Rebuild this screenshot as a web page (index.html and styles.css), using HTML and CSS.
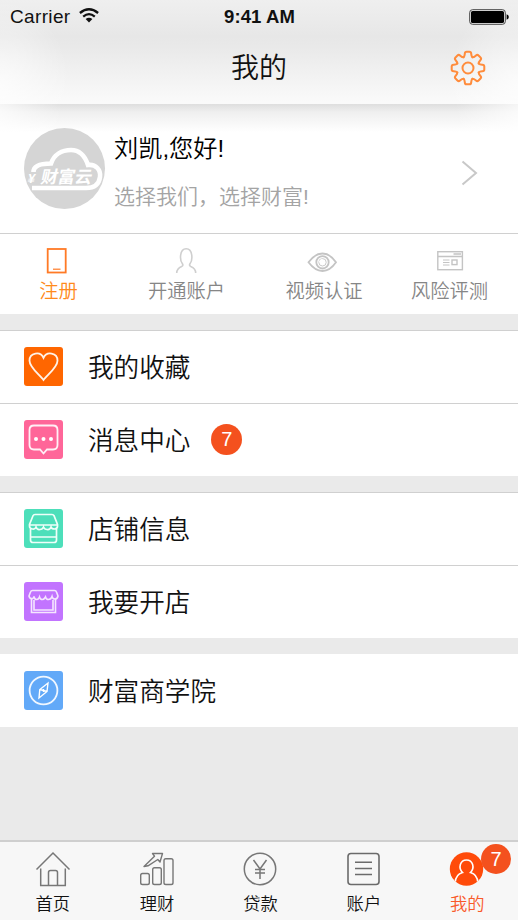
FILE: index.html
```html
<!DOCTYPE html>
<html lang="zh-CN">
<head>
<meta charset="utf-8">
<title>我的</title>
<link rel="stylesheet" href="styles.css">
</head>
<body>
<div class="app">
  <header class="header">
    <div class="status">
      <div class="carrier">Carrier
        <svg class="wifi" width="20" height="15" viewBox="0 0 20 15"><g fill="none" stroke="#111" stroke-width="2.3"><path d="M.9 5Q10-2.6 19.1 5"/><path d="M4.2 8.6Q10 3.7 15.8 8.6"/></g><path d="M6.6 11.1Q10 8.2 13.4 11.1L10 14.4Z" fill="#111"/></svg>
      </div>
      <div class="time">9:41 AM</div>
      <svg class="battery" width="40" height="16" viewBox="0 0 40 16"><rect x=".7" y=".7" width="35.6" height="14.6" rx="2.8" fill="#eee" stroke="#444"/><rect x="2" y="2" width="33" height="12" rx="1.6" fill="#000"/><path d="M37.6 5.2Q39.8 5.8 39.8 8T37.6 10.8Z" fill="#000"/></svg>
    </div>
    <div class="titlebar">
      <h1>我的</h1>
      <svg class="gear" width="36" height="36" viewBox="-18 -18 36 36" fill="none" stroke="#ff8c3c" stroke-width="2" stroke-linecap="round">
        <defs><path id="tooth" d="M-4.4-10.7C-3.3-11.8-3.3-12.7-3.2-14.4Q-3.1-16.3-1.4-16.3H1.4Q3.1-16.3 3.2-14.4C3.3-12.7 3.3-11.8 4.4-10.7"/></defs>
        <use href="#tooth"/><use href="#tooth" transform="rotate(45)"/><use href="#tooth" transform="rotate(90)"/><use href="#tooth" transform="rotate(135)"/><use href="#tooth" transform="rotate(180)"/><use href="#tooth" transform="rotate(225)"/><use href="#tooth" transform="rotate(270)"/><use href="#tooth" transform="rotate(315)"/>
        <circle r="5.5"/>
      </svg>
    </div>
  </header>

  <section class="profile">
    <svg class="avatar" width="82" height="82" viewBox="0 0 82 82">
      <circle cx="40.5" cy="41.5" r="40.5" fill="#d5d5d5"/>
      <path d="M9.5 45C9.5 40 15 36.500 27 36.500C30 27.500 38 23 47 23C56 23 61 29 64 38C72 37 77 43 76 50C75 58 69 61 62 61H8" fill="none" stroke="#fff" stroke-width="4.600"/>
      <text class="logo" x="3" y="56" font-size="13" transform="translate(12 0) skewX(-12)">¥</text>
      <text class="logo" x="16" y="56" font-size="17" transform="translate(12 0) skewX(-12)">财富云</text>
    </svg>
    <div class="greeting">
      <p class="name">刘凯,您好!</p>
      <p class="slogan">选择我们，选择财富!</p>
    </div>
    <svg class="chevron" width="17" height="26" viewBox="0 0 17 26"><path d="M1.5 1.5L15 13L1.5 24.5" fill="none" stroke="#c8c8c8" stroke-width="2"/></svg>
  </section>

  <nav class="shortcuts">
    <a class="shortcut on">
      <svg width="40" height="28" viewBox="0 0 40 28" fill="none" stroke="#ff7a26"><rect x="8.7" y="3" width="18" height="23.5" stroke-width="1.8"/><path d="M14 23.2H21.5" stroke-width="1.2"/></svg>
      <span>注册</span>
    </a>
    <a class="shortcut">
      <svg width="40" height="28" viewBox="0 0 40 28" fill="none" stroke="#cfcfcf" stroke-width="1.6"><path d="M9.700 27C9.700 23 11.500 21.700 14.700 20.400Q16.600 19.500 15.400 17.800C12.700 14.500 12.200 2.700 19.200 2.700S25.700 14.500 23 17.800Q21.800 19.500 23.700 20.400C27 21.700 28.700 23 28.700 27"/></svg>
      <span>开通账户</span>
    </a>
    <a class="shortcut">
      <svg width="40" height="28" viewBox="0 0 40 28" fill="none" stroke="#c4c4c4" stroke-width="1.8"><path d="M4.500 16.300Q11 7.500 18.500 7.500T32 16.300Q26 25 18.500 25T4.500 16.300Z"/><circle cx="18.500" cy="16.300" r="6.200"/><circle cx="18.500" cy="16.300" r="3.700" stroke-width=".9"/><path d="M15.500 16L18 13.500" stroke="#fff"/></svg>
      <span>视频认证</span>
    </a>
    <a class="shortcut">
      <svg width="40" height="28" viewBox="0 0 40 28" fill="none" stroke="#c4c4c4" stroke-width="1.4"><rect x="7.800" y="5.700" width="24.600" height="18"/><path d="M8 10.500H32M23.500 8H31"/><path d="M13 14H19.500M13 16.500H19.500M13 19H19.500" stroke-width="1"/><rect x="22" y="14" width="5" height="4.600"/></svg>
      <span>风险评测</span>
    </a>
  </nav>

  <main>
    <section class="group">
      <a class="row">
        <svg class="tile" width="39" height="39" viewBox="0 0 39 39"><rect width="39" height="39" rx="3" fill="#ff6600"/><path d="M19.5 33C16 28 5.5 20.5 5.5 13.7C5.5 5.5 16.5 4 19.5 10.8C22.5 4 33.5 5.5 33.5 13.7C33.5 20.5 23 28 19.5 33Z" fill="none" stroke="#fff3e8" stroke-width="1.8"/></svg>
        <span>我的收藏</span>
      </a>
      <a class="row">
        <svg class="tile" width="39" height="39" viewBox="0 0 39 39"><rect width="39" height="39" rx="3" fill="#ff6699"/><path d="M10 5.5H29Q33.5 5.5 33.5 10V25Q33.5 29.5 29 29.5H23L19.5 33.5L16 29.5H10Q5.5 29.5 5.5 25V10Q5.5 5.5 10 5.5Z" fill="none" stroke="#fff0f5" stroke-width="1.8"/><g fill="#fff"><circle cx="12" cy="19" r="2"/><circle cx="19.5" cy="19" r="2"/><circle cx="27" cy="19" r="2"/></g></svg>
        <span>消息中心</span><b class="badge">7</b>
      </a>
    </section>
    <section class="group">
      <a class="row">
        <svg class="tile" width="39" height="39" viewBox="0 0 39 39"><rect width="39" height="39" rx="3" fill="#4ddfba"/><g fill="none" stroke="#effff9" stroke-width="1.7"><path d="M11 5.5H28Q29.500 5.5 30 6.700L33.5 15.5V17.5Q33 20 30.5 20Q27.5 20 27 18Q26 21 23 20.5Q20.5 20.5 19.5 18Q18.5 20.5 16 20.5Q13 21 12 18Q11 20.5 8.5 20Q5.5 20 5.5 17V15.5L9 6.700Q9.500 5.500 11 5.500ZM5.500 16H33.500"/><path d="M6.500 20V31Q6.500 33.500 9 33.500H30Q32.500 33.500 32.500 31V20M7 28H32"/></g></svg>
        <span>店铺信息</span>
      </a>
      <a class="row">
        <svg class="tile" width="39" height="39" viewBox="0 0 39 39"><rect width="39" height="39" rx="3" fill="#c274ff"/><g fill="none" stroke="#f5e6ff" stroke-width="1.6"><path d="M8.5 8.5H30.5Q32 8.5 32.5 10L34 14Q33.5 17 31 17Q28.5 17 28 14.5Q27 17.5 24.5 17.5Q22 17.5 21.5 15Q20 17.5 18.5 17.5Q16 17.5 15.5 15Q14.5 17.5 12.5 17.5Q10.5 17.5 10 14.5Q9.5 17 7.5 16.5Q5.5 16.5 5 14L6.5 10Q7 8.5 8.5 8.5Z"/><path d="M7.5 17V30.5H31.5V17M10 18V28H29V18"/></g></svg>
        <span>我要开店</span>
      </a>
    </section>
    <section class="group plain">
      <a class="row">
        <svg class="tile" width="39" height="39" viewBox="0 0 39 39"><rect width="39" height="39" rx="3" fill="#62a9f8"/><circle cx="19.5" cy="19.5" r="13.9" fill="none" stroke="#f0f7ff" stroke-width="1.8"/><path d="M24 12L23 20.5L15 27L15.8 18.5ZM15.8 18.5L23 20.5M19.5 18V21" fill="none" stroke="#fff" stroke-width="1.4"/></svg>
        <span>财富商学院</span>
      </a>
    </section>
  </main>

  <nav class="tabbar">
    <a class="tab">
      <svg width="36" height="36" viewBox="0 0 36 36" fill="none" stroke="#777" stroke-width="1.5"><path d="M1.5 18.5L18 2L34.5 18.5M5.7 17.5V34.5H30.3V17.5M13.5 34.5V21.5Q13.5 19.5 15.5 19.5H20.5Q22.5 19.5 22.5 21.5V34.5"/></svg>
      <span>首页</span>
    </a>
    <a class="tab">
      <svg width="36" height="36" viewBox="0 0 36 36" fill="none" stroke="#777" stroke-width="1.4"><rect x="1.7" y="22.5" width="8.6" height="11" rx="1.8"/><rect x="13.7" y="16.7" width="8.6" height="16.8" rx="1.8"/><rect x="25" y="7.7" width="9" height="25.8" rx="1.8"/><path d="M5 15.5L15.5 5.2L13.5 2.5H23.5L21 11L18.8 8.5L9 14.8Z" stroke-linejoin="round"/></svg>
      <span>理财</span>
    </a>
    <a class="tab">
      <svg width="36" height="36" viewBox="0 0 36 36" fill="none" stroke="#777" stroke-width="1.5"><circle cx="18" cy="18" r="15.7"/><path d="M11.5 9L18 18L24.5 9M18 18V28M13 18.5H23M13 22H23"/></svg>
      <span>贷款</span>
    </a>
    <a class="tab">
      <svg width="36" height="36" viewBox="0 0 36 36" fill="none" stroke="#6b6b6b" stroke-width="1.6"><rect x="2" y="2.5" width="31" height="31" rx="3"/><path d="M9 11.3H26M9 17.5H26M9 23.5H26"/></svg>
      <span>账户</span>
    </a>
    <a class="tab on">
      <svg width="36" height="36" viewBox="0 0 36 36"><defs><clipPath id="disc"><circle cx="17.5" cy="18" r="16.7"/></clipPath></defs><circle cx="17.5" cy="18" r="16.7" fill="#ff4b0a"/><path clip-path="url(#disc)" d="M6 32C6.5 25.5 9.5 22.5 13.5 21.5C9 17 11 9 17.5 9S26 17 21.5 21.5C25.5 22.5 28.5 25.5 29 32" fill="none" stroke="#fff" stroke-width="1.6"/></svg>
      <span>我的</span><b class="badge">7</b>
    </a>
  </nav>
</div>
</body>
</html>
```

FILE: styles.css
```css
* { box-sizing: border-box; }

body, h1, p { margin: 0; }

body {
  font-family: "Liberation Sans", "Noto Sans CJK SC", sans-serif;
  font-weight: 350;
  color: #111;
  background: #eaeaea;
}

.app {
  width: 518px;
  height: 920px;
  display: flex;
  flex-direction: column;
  overflow: hidden;
}

.header {
  height: 104px;
  flex: none;
  background:
    radial-gradient(70px 85px at 0 85px, rgba(255,255,255,.7), rgba(255,255,255,0)),
    radial-gradient(70px 85px at 100% 85px, rgba(255,255,255,.7), rgba(255,255,255,0)),
    linear-gradient(#efefef, #e7e7e7 35%, #e9e9e9 45%, #fafafa 98%);
}

.status {
  height: 33px;
  display: grid;
  grid-template-columns: 1fr auto 1fr;
  align-items: center;
  padding: 0 9px 0 10px;
  font-size: 19px;
  line-height: 33px;
}

.carrier { display: flex; align-items: center; gap: 9px; letter-spacing: .35px; }
.wifi { margin: -2px 0 0 -1px; }
.time { font-weight: 700; font-size: 18.5px; letter-spacing: .1px; }
.battery { justify-self: end; }

.titlebar {
  height: 71px;
  display: grid;
  grid-template-columns: 1fr auto 1fr;
  align-items: center;
  padding: 0 32px;
}

.titlebar h1 {
  grid-column: 2;
  font-size: 28px;
  font-weight: 350;
  line-height: 70px;
}

.gear { justify-self: end; margin-top: -2px; }

.profile {
  height: 130px;
  flex: none;
  display: flex;
  padding: 23px 40px 0 24px;
  border-bottom: 1px solid #d0d0d0;
  background:
    linear-gradient(90deg, rgba(255,255,255,.7), rgba(255,255,255,0) 12%, rgba(255,255,255,0) 88%, rgba(255,255,255,.7)) 0 0 / 100% 30px no-repeat,
    linear-gradient(#dedede, #efefef 8px, #fff 28px);
}

.logo { fill: #fff; font-weight: 700; }
.greeting { flex: 1; margin-left: 8px; }
.name { font-size: 24.2px; line-height: 36px; margin-top: 4px; color: #000; }
.slogan { font-size: 21px; line-height: 32px; margin-top: 14px; color: #a4a4a4; }
.chevron { margin-top: 33px; }

.shortcuts {
  height: 80px;
  flex: none;
  display: grid;
  grid-template-columns: 117px 139px 136px 1fr;
  background: #fff;
  color: #868686;
  font-size: 19.3px;
}

.shortcut { display: flex; flex-direction: column; align-items: center; padding-top: 12px; }
.shortcut span { line-height: 30px; margin-top: 3px; }
.shortcut.on { color: #ff8a1c; }
.shortcut:last-child { padding-right: 11px; }

main { flex: 1; }

.group {
  margin-top: 16px;
  background: #fff;
  border-top: 1px solid #d0d0d0;
}

.row {
  height: 73px;
  display: flex;
  align-items: center;
  padding-left: 24px;
  font-size: 25.6px;
  line-height: 72px;
  border-bottom: 1px solid #d0d0d0;
}

.row:last-child { height: 72px; border-bottom: 0; }
.row span { margin-left: 25px; padding-top: 1px; }
.tile { margin-top: -2px; }
.plain { border-top-color: #fff; }

.badge {
  width: 31px;
  height: 31px;
  border-radius: 50%;
  background: #f4511e;
  color: #fff;
  font-size: 20px;
  font-weight: 400;
  line-height: 31px;
  text-align: center;
}

.row .badge { margin: -2px 0 0 21px; }

.tabbar {
  height: 80px;
  flex: none;
  display: grid;
  grid-template-columns: repeat(5, 1fr);
  border-top: 2px solid #cfcfcf;
  background: #f7f7f7;
  font-size: 17.3px;
  padding-left: 1px;
}

.tab {
  position: relative;
  display: flex;
  flex-direction: column;
  align-items: center;
  padding-top: 9px;
}

.tab:nth-child(2), .tab:nth-child(3), .tab:nth-child(4) { padding-left: 2px; }
.tab span { line-height: 28px; margin-top: 3px; }
.tab.on { color: #f95a2a; padding-left: 2px; }
.tab .badge { position: absolute; top: 2px; right: 7px; width: 30px; height: 30px; line-height: 30px; }
```
